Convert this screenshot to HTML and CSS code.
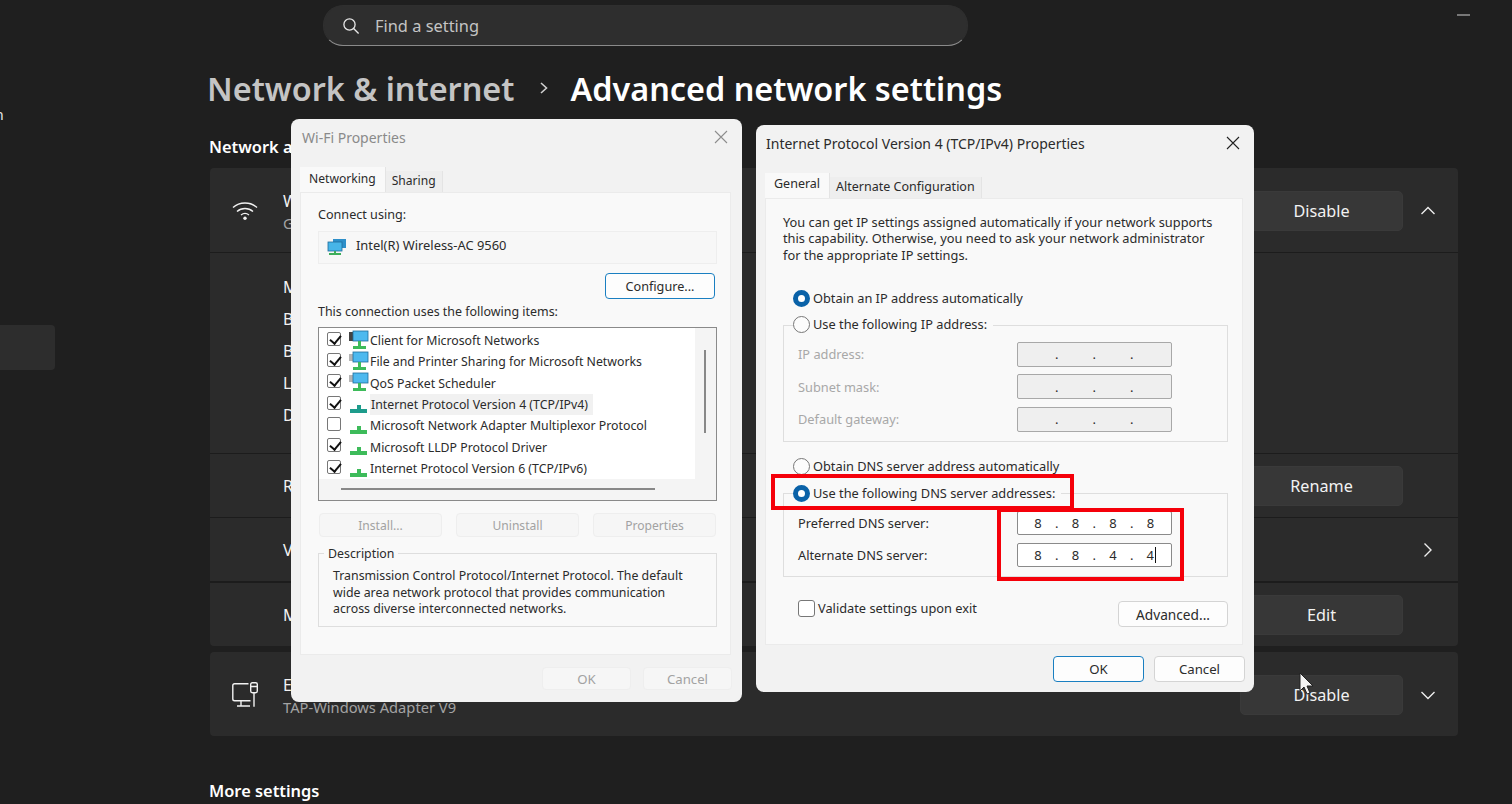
FILE: index.html
```html
<!DOCTYPE html>
<html>

<head>
    <title>Advanced network settings</title>
    <meta name="viewport" content="width=device-width, initial-scale=1.0">
    <link rel="stylesheet" href="styles.css">
</head>

<body>
    <div class="app">
        <aside class="sidebar">
            <div class="side-text">n</div>
            <div class="side-active"></div>
        </aside>

        <main class="main">
            <div class="search-wrap">
                <div class="search">
                    <svg class="search-icon" width="18" height="18" viewBox="0 0 18 18">
                        <circle cx="7.5" cy="7.5" r="5.6" fill="none" stroke="#e8e8e8" stroke-width="1.3" />
                        <path d="M11.6 11.6 L16.6 16.6" stroke="#e8e8e8" stroke-width="1.4" />
                    </svg>
                    <span>Find a setting</span>
                </div>
                <div class="min-mark"></div>
            </div>

            <h1 class="crumbs">
                <span class="crumb-parent">Network &amp; internet</span>
                <svg class="crumb-sep" width="12" height="16" viewBox="0 0 12 16">
                    <path d="M3 3 L8.5 8 L3 13" fill="none" stroke="#d0d0d0" stroke-width="1.6" />
                </svg>
                <span>Advanced network settings</span>
            </h1>

            <h2 class="section-title">Network adapters</h2>

            <section class="card">
                <div class="row row-head">
                    <svg class="row-icon" width="26" height="20" viewBox="0 0 26 20">
                        <path d="M1 6.5 C7.5 0.5 18.5 0.5 25 6.5 M5 10.5 C9.5 6.5 16.5 6.5 21 10.5 M9 14 C11.5 12 14.5 12 17 14" fill="none" stroke="#f2f2f2" stroke-width="1.4" />
                        <circle cx="13" cy="17.2" r="1.7" fill="#f2f2f2" />
                    </svg>
                    <div class="row-text">
                        <div class="row-name">Wi-Fi</div>
                        <div class="row-sub">Google</div>
                    </div>
                    <button class="btn">Disable</button>
                    <svg class="chev" width="16" height="16" viewBox="0 0 16 16">
                        <path d="M1.5 11 L8 4.5 L14.5 11" fill="none" stroke="#ededed" stroke-width="1.4" />
                    </svg>
                </div>
                <div class="row row-details">
                    <div>Manufacturer:</div>
                    <div>Bluetooth:</div>
                    <div>Bands:</div>
                    <div>Link speed:</div>
                    <div>Driver:</div>
                </div>
                <div class="row row-rename">
                    <div class="row-label">Rename this adapter</div>
                    <button class="btn">Rename</button>
                    <div class="chev-space"></div>
                </div>
                <div class="row row-view">
                    <div class="row-label">View additional properties</div>
                    <svg class="chev" width="16" height="16" viewBox="0 0 16 16">
                        <path d="M4.5 1.5 L11 8 L4.5 14.5" fill="none" stroke="#ededed" stroke-width="1.4" />
                    </svg>
                </div>
                <div class="row row-edit">
                    <div class="row-label">More adapter options</div>
                    <button class="btn">Edit</button>
                    <div class="chev-space"></div>
                </div>
            </section>

            <section class="card card-second">
                <div class="row row-head row-eth">
                    <svg class="row-icon" width="26" height="26" viewBox="0 0 26 26">
                        <path d="M16.5 1.7 H2.6 Q0.8 1.7 0.8 3.5 V17 Q0.8 18.8 2.6 18.8 H18.5 M9 18.8 V23.7 M5 24 H18" fill="none" stroke="#f2f2f2" stroke-width="1.4" />
                        <rect x="18.7" y="0.7" width="6.6" height="10" rx="1.6" fill="none" stroke="#f2f2f2" stroke-width="1.4" />
                        <path d="M18.7 4.5 H25.3 M22 10.7 V24.8" fill="none" stroke="#f2f2f2" stroke-width="1.4" />
                    </svg>
                    <div class="row-text">
                        <div class="row-name">Ethernet</div>
                        <div class="row-sub">TAP-Windows Adapter V9</div>
                    </div>
                    <button class="btn">Disable</button>
                    <svg class="chev" width="16" height="16" viewBox="0 0 16 16">
                        <path d="M1.5 5 L8 11.5 L14.5 5" fill="none" stroke="#ededed" stroke-width="1.4" />
                    </svg>
                </div>
            </section>

            <h2 class="section-title section-more">More settings</h2>
        </main>
    </div>

    <!-- Wi-Fi properties window -->
    <div class="dialog dialog-wifi">
        <div class="dialog-title title-faded">
            <span>Wi-Fi Properties</span>
            <svg width="14" height="14" viewBox="0 0 14 14">
                <path d="M1 1 L13 13 M13 1 L1 13" stroke="#8d8d8d" stroke-width="1.1" />
            </svg>
        </div>
        <div class="tabs tabs-wifi">
            <div class="tab tab-on">Networking</div>
            <div class="tab">Sharing</div>
        </div>
        <div class="panel panel-wifi">
            <div class="field-label">Connect using:</div>
            <div class="adapter">
                <svg width="20" height="20" viewBox="0 0 20 20">
                    <rect x="6" y="2" width="13" height="9" fill="#2d8fc9" />
                    <rect x="1" y="5" width="14" height="9" fill="#47b5e8" stroke="#1f6d9c" stroke-width="0.8" />
                    <path d="M7 14 H9 V16 H14 V18 H2 V16 H7 Z" fill="#3dae5a" />
                </svg>
                <span>Intel(R) Wireless-AC 9560</span>
            </div>
            <div class="configure-row">
                <button class="dlg-btn dlg-btn-primary configure">Configure...</button>
            </div>
            <div class="field-label items-label">This connection uses the following items:</div>
            <div class="items">
                <div class="items-list">
                    <div class="item">
                        <span class="check check-on"></span>
                        <svg class="net-icon" width="20" height="20" viewBox="0 0 20 20">
                            <rect x="0" y="2" width="5" height="9" fill="#444" />
                            <rect x="4" y="1" width="15" height="10" fill="#4db9ef" stroke="#1f6d9c" stroke-width="0.8" />
                            <path d="M9 11 H12 V16 H17 V19 H4 V16 H9 Z" fill="#3dbb5a" />
                        </svg>
                        <span>Client for Microsoft Networks</span>
                    </div>
                    <div class="item">
                        <span class="check check-on"></span>
                        <svg class="net-icon" width="20" height="20" viewBox="0 0 20 20">
                            <rect x="0" y="3" width="5" height="7" fill="#b5b5b5" />
                            <rect x="4" y="1" width="15" height="10" fill="#4db9ef" stroke="#1f6d9c" stroke-width="0.8" />
                            <path d="M9 11 H12 V16 H17 V19 H4 V16 H9 Z" fill="#3dbb5a" />
                        </svg>
                        <span>File and Printer Sharing for Microsoft Networks</span>
                    </div>
                    <div class="item">
                        <span class="check check-on"></span>
                        <svg class="net-icon" width="20" height="20" viewBox="0 0 20 20">
                            <rect x="0" y="3" width="5" height="7" fill="#b5b5b5" />
                            <rect x="4" y="1" width="15" height="10" fill="#4db9ef" stroke="#1f6d9c" stroke-width="0.8" />
                            <path d="M9 11 H12 V16 H17 V19 H4 V16 H9 Z" fill="#3dbb5a" />
                        </svg>
                        <span>QoS Packet Scheduler</span>
                    </div>
                    <div class="item">
                        <span class="check check-on"></span>
                        <svg class="net-icon" width="20" height="20" viewBox="0 0 20 20">
                            <path d="M8 11 H12 V15 H18 V19 H1 V15 H8 Z" fill="#1e9c8c" />
                        </svg>
                        <span class="item-selected">Internet Protocol Version 4 (TCP/IPv4)</span>
                    </div>
                    <div class="item">
                        <span class="check"></span>
                        <svg class="net-icon" width="20" height="20" viewBox="0 0 20 20">
                            <path d="M8 11 H12 V15 H18 V19 H1 V15 H8 Z" fill="#3dbb5a" />
                        </svg>
                        <span>Microsoft Network Adapter Multiplexor Protocol</span>
                    </div>
                    <div class="item">
                        <span class="check check-on"></span>
                        <svg class="net-icon" width="20" height="20" viewBox="0 0 20 20">
                            <path d="M8 11 H12 V15 H18 V19 H1 V15 H8 Z" fill="#3dbb5a" />
                        </svg>
                        <span>Microsoft LLDP Protocol Driver</span>
                    </div>
                    <div class="item">
                        <span class="check check-on"></span>
                        <svg class="net-icon" width="20" height="20" viewBox="0 0 20 20">
                            <path d="M8 11 H12 V15 H18 V19 H1 V15 H8 Z" fill="#3dbb5a" />
                        </svg>
                        <span>Internet Protocol Version 6 (TCP/IPv6)</span>
                    </div>
                </div>
                <div class="scroll-v"></div>
                <div class="scroll-h"></div>
            </div>
            <div class="three-btns">
                <button class="dlg-btn dlg-btn-off">Install...</button>
                <button class="dlg-btn dlg-btn-off">Uninstall</button>
                <button class="dlg-btn dlg-btn-off">Properties</button>
            </div>
            <div class="groupbox desc-box">
                <div class="legend">Description</div>
                <p>Transmission Control Protocol/Internet Protocol. The default wide area network protocol that provides communication across diverse interconnected networks.</p>
            </div>
        </div>
        <div class="dialog-foot foot-wifi">
            <button class="dlg-btn dlg-btn-off foot-btn">OK</button>
            <button class="dlg-btn dlg-btn-off foot-btn">Cancel</button>
        </div>
    </div>

    <!-- IPv4 properties window -->
    <div class="dialog dialog-ip">
        <div class="dialog-title">
            <span>Internet Protocol Version 4 (TCP/IPv4) Properties</span>
            <svg width="14" height="14" viewBox="0 0 14 14">
                <path d="M1 1 L13 13 M13 1 L1 13" stroke="#222" stroke-width="1.1" />
            </svg>
        </div>
        <div class="tabs">
            <div class="tab tab-on">General</div>
            <div class="tab">Alternate Configuration</div>
        </div>
        <div class="panel panel-ip">
            <p class="intro">You can get IP settings assigned automatically if your network supports this capability. Otherwise, you need to ask your network administrator for the appropriate IP settings.</p>
            <div class="radio-row first-radio"><span class="radio radio-on"></span>Obtain an IP address automatically</div>
            <div class="groupbox ip-box">
                <div class="legend legend-radio"><span class="radio"></span>Use the following IP address:</div>
                <div class="ip-row off"><span>IP address:</span>
                    <div class="ip-input ip-off"><span></span><i>.</i><span></span><i>.</i><span></span><i>.</i><span></span></div>
                </div>
                <div class="ip-row off"><span>Subnet mask:</span>
                    <div class="ip-input ip-off"><span></span><i>.</i><span></span><i>.</i><span></span><i>.</i><span></span></div>
                </div>
                <div class="ip-row off"><span>Default gateway:</span>
                    <div class="ip-input ip-off"><span></span><i>.</i><span></span><i>.</i><span></span><i>.</i><span></span></div>
                </div>
            </div>
            <div class="radio-row dns-radio"><span class="radio"></span>Obtain DNS server address automatically</div>
            <div class="groupbox dns-box">
                <div class="legend legend-radio"><span class="radio radio-on"></span>Use the following DNS server addresses:</div>
                <div class="ip-row dns-row"><span>Preferred DNS server:</span>
                    <div class="ip-input"><span>8</span><i>.</i><span>8</span><i>.</i><span>8</span><i>.</i><span>8</span></div>
                </div>
                <div class="ip-row dns-row"><span>Alternate DNS server:</span>
                    <div class="ip-input"><span>8</span><i>.</i><span>8</span><i>.</i><span>4</span><i>.</i><span class="caret">4</span></div>
                </div>
            </div>
            <div class="validate-row">
                <div class="validate"><span class="check round"></span>Validate settings upon exit</div>
                <button class="dlg-btn advanced">Advanced...</button>
            </div>
        </div>
        <div class="dialog-foot">
            <button class="dlg-btn dlg-btn-primary foot-btn">OK</button>
            <button class="dlg-btn foot-btn">Cancel</button>
        </div>
        <div class="mark mark-radio"></div>
        <div class="mark mark-fields"></div>
    </div>

    <svg class="cursor" width="16" height="24" viewBox="0 0 16 24">
        <path d="M1 1 L1 19 L5 15 L8 22 L11 21 L8 14 L14 14 Z" fill="#f4f4f4" stroke="#222" stroke-width="1" />
    </svg>
</body>

</html>
```

FILE: styles.css
```css
* {
    box-sizing: border-box;
}

body {
    margin: 0;
    width: 1512px;
    height: 804px;
    overflow: hidden;
    background-color: #1f1f1f;
    color: #f2f2f2;
    font-family: "Noto Sans", "Open Sans", sans-serif;
}

.app {
    display: flex;
    height: 804px;
}

/* sidebar, almost all of it is cropped off */
.sidebar {
    width: 210px;
    flex-shrink: 0;
}

.side-text {
    margin: 104px 0 0 -5px;
    height: 24px;
    font-size: 14px;
    line-height: 22px;
    color: #e8e8e8;
}

.side-active {
    margin-top: 197px;
    width: 55px;
    height: 45px;
    background-color: #2d2d2d;
    border-radius: 0 4px 4px 0;
}

.main {
    width: 1248px;
    flex-shrink: 0;
}

.search-wrap {
    display: flex;
    justify-content: space-between;
    padding: 5px 0 0 113px;
}

.search {
    display: flex;
    align-items: center;
    gap: 15px;
    width: 645px;
    height: 41px;
    padding-left: 18px;
    background-color: #2e2e2e;
    border: 1px solid #2f2f2f;
    border-bottom-color: #8a8a8a;
    border-radius: 20px;
    font-size: 16.4px;
    color: #c4c4c4;
}

.search-icon {
    flex-shrink: 0;
}

.min-mark {
    width: 13px;
    height: 2px;
    margin: 9px -12px 0 0;
    background-color: #777;
}

.crumbs {
    display: flex;
    align-items: center;
    height: 48px;
    margin: 18px 0 0 -3px;
    font-size: 32.4px;
    font-weight: 600;
    color: #fff;
    white-space: nowrap;
}

.crumb-parent {
    color: #c4c4c4;
}

.crumb-sep {
    margin: 0 20px 0 24px;
}

.section-title {
    margin: 24px 0 0 -1px;
    height: 22px;
    font-size: 16.4px;
    line-height: 22px;
    font-weight: 600;
    color: #fff;
}

.section-more {
    margin-top: 44px;
}

.card {
    margin-top: 10px;
    background-color: #2b2b2b;
    border-radius: 4px;
}

.card-second {
    margin-top: 6px;
}

.row {
    display: flex;
    align-items: center;
    padding-right: 22px;
    border-bottom: 1px solid #1c1c1c;
}

.row:last-child {
    border-bottom: 0;
}

.row-head {
    height: 85px;
    padding-top: 2px;
    padding-left: 22px;
}

.row-eth {
    height: 84px;
}

.row-icon {
    flex-shrink: 0;
    margin-right: 25px;
}

.row-text {
    flex: 1;
    padding-top: 2px;
}

.row-name {
    font-size: 16px;
    line-height: 22px;
}

.row-sub {
    font-size: 14.7px;
    line-height: 22px;
    color: #a3a3a3;
}

.row-details {
    display: block;
    height: 201px;
    padding: 18px 0 0 73px;
    font-size: 16px;
    line-height: 32px;
}

.row-rename,
.row-view,
.row-edit {
    padding-left: 73px;
}

.row-rename {
    height: 64px;
}

.row-view {
    height: 65px;
    border-bottom-width: 2px;
}

.row-edit {
    height: 63px;
}

.row-label {
    flex: 1;
    font-size: 16px;
}

.btn {
    width: 163px;
    height: 40px;
    background-color: #373737;
    border: 1px solid #3a3a3a;
    border-radius: 5px;
    color: #f2f2f2;
    font-family: inherit;
    font-size: 16.2px;
}

.chev {
    flex-shrink: 0;
    margin-left: 17px;
}

.chev-space {
    width: 33px;
    flex-shrink: 0;
}

.dialog {
    position: absolute;
    background-color: #f2f2f2;
    border-radius: 8px;
    color: #2b2b2b;
    font-size: 12.5px;
}

.dialog-wifi {
    left: 291px;
    top: 119px;
    width: 451px;
    height: 583px;
}

.dialog-ip {
    left: 756px;
    top: 125px;
    width: 498px;
    height: 567px;
}

.dialog-title {
    display: flex;
    justify-content: space-between;
    align-items: center;
    height: 36px;
    padding: 0 14px 0 10px;
    font-size: 14px;
}

.title-faded {
    padding-left: 11px;
    color: #8a8a8a;
}

.tabs {
    display: flex;
    height: 25px;
    padding-left: 9px;
    margin-top: 12px;
}

.tabs-wifi {
    font-size: 12.1px;
}

.tab {
    margin-top: 4px;
    height: 21px;
    padding: 0 6px;
    line-height: 20px;
    background-color: #eeeeee;
    border-right: 1px solid #e4e4e4;
}

.tab-on {
    margin-top: 0;
    height: 25px;
    background-color: #f9f9f9;
    line-height: 22px;
    padding: 0 9px;
}

.tabs-wifi .tab-on {
    line-height: 24px;
}

.panel {
    background-color: #f9f9f9;
    border: 1px solid #ebebeb;
    margin: 0 11px 0 9px;
}

.panel-wifi {
    height: 463px;
    padding: 0 13px 0 17px;
}

.field-label {
    padding-top: 13px;
    height: 38px;
    line-height: 18px;
    font-size: 12.6px;
}

.adapter {
    display: flex;
    align-items: center;
    gap: 9px;
    height: 33px;
    padding: 0 0 6px 8px;
    background-color: #f7f7f7;
    border: 1px solid #eeeeee;
    font-size: 12.9px;
}

.adapter svg {
    margin-top: 4px;
}

.configure-row {
    display: flex;
    justify-content: flex-end;
    margin-top: 9px;
    padding-right: 2px;
}

.dlg-btn {
    height: 24px;
    background-color: #fdfdfd;
    border: 1px solid #d4d4d4;
    border-radius: 4px;
    color: #2b2b2b;
    font-family: inherit;
    font-size: 13.2px;
    padding: 0;
}

.dlg-btn-primary {
    border: 1.5px solid #1a7fc1;
}

.dlg-btn-off {
    color: #a2a2a2;
    background-color: #f6f6f6;
    border-color: #eeeeee;
}

.configure {
    width: 110px;
    height: 26px;
    font-size: 12.65px;
}

.items-label {
    height: 28px;
    padding-top: 4px;
    font-size: 12.45px;
}

.items {
    position: relative;
    height: 174px;
    background-color: #f4f4f4;
    border: 1px solid #8a8a8a;
    font-size: 12.3px;
}

.items-list {
    width: 376px;
    height: 151px;
    padding: 2px 0 0 8px;
    background-color: #fff;
}

.item {
    display: flex;
    align-items: center;
    height: 21.33px;
    white-space: nowrap;
}

.check {
    width: 14px;
    height: 14px;
    margin-top: -4px;
    background-color: #fff;
    border: 1px solid #777;
    border-radius: 2px;
    flex-shrink: 0;
}

/* tick drawn with two borders */
.check-on::after {
    content: "";
    display: block;
    width: 5px;
    height: 9px;
    margin: 0 0 0 3.5px;
    border-right: 2px solid #111;
    border-bottom: 2px solid #111;
    transform: rotate(40deg);
}

.net-icon {
    margin: -2px 1px 0 8px;
    flex-shrink: 0;
}

.item-selected {
    background-color: #f1f1f1;
    padding: 2px 5px 2px 1px;
    line-height: 17px;
}

.scroll-v {
    position: absolute;
    right: 10px;
    top: 22px;
    width: 2px;
    height: 83px;
    background-color: #888;
}

.scroll-h {
    position: absolute;
    left: 22px;
    bottom: 10px;
    width: 314px;
    height: 2px;
    background-color: #888;
}

.three-btns {
    display: grid;
    grid-template-columns: repeat(3, 123px);
    justify-content: space-between;
    margin-top: 12px;
    padding: 0 1px 0 1px;
}

.three-btns .dlg-btn {
    font-size: 12.1px;
}

.groupbox {
    position: relative;
    border: 1px solid #dedede;
}

.legend {
    position: absolute;
    top: -10px;
    left: 5px;
    padding: 0 4px;
    line-height: 18px;
    background-color: #f9f9f9;
}

.desc-box {
    height: 74px;
    margin-top: 16px;
    padding: 14px 14px 0 14px;
    font-size: 12.35px;
}

.desc-box .legend {
    top: -9px;
}

.desc-box p {
    margin: 0;
    line-height: 16.5px;
}

.dialog-foot {
    display: flex;
    justify-content: flex-end;
    gap: 10px;
    padding: 11px 9px 0 0;
}

.foot-wifi {
    gap: 12px;
    padding: 12px 10px 0 0;
}

.foot-wifi .foot-btn {
    width: 89px;
    height: 23px;
}

.foot-btn {
    width: 91px;
    height: 26px;
}

.panel-ip {
    position: relative;
    height: 447px;
    padding: 15px 14px 0 17px;
    font-size: 12.8px;
}

.intro {
    margin: 0;
    width: 434px;
    line-height: 16.4px;
}

.radio-row {
    display: flex;
    align-items: center;
    gap: 3px;
    height: 20px;
}

.first-radio {
    margin: 25px 0 0 10px;
}

.radio {
    display: inline-block;
    width: 17px;
    height: 17px;
    background-color: #fcfcfc;
    border: 1px solid #777;
    border-radius: 50%;
    flex-shrink: 0;
}

.radio-on {
    background-color: #fff;
    border: 5px solid #0a62a8;
}

.ip-box {
    height: 117px;
    margin-top: 17px;
    padding-top: 11.5px;
}

.legend-radio {
    display: flex;
    align-items: center;
    gap: 3px;
    left: 9px;
    padding: 0 6px 0 0;
}

.ip-box .legend-radio {
    top: -11px;
}

.ip-row {
    display: flex;
    justify-content: space-between;
    align-items: center;
    height: 32.6px;
    padding: 0 55px 0 14px;
}

.dns-row {
    height: 32px;
}

.off {
    color: #a8a8a8;
}

.ip-input {
    display: flex;
    align-items: center;
    width: 155px;
    height: 25px;
    padding-left: 10.5px;
    background-color: #fff;
    border: 1px solid #8a8a8a;
    border-radius: 2px;
    color: #2b2b2b;
    font-size: 13px;
}

.dns-row .ip-input {
    height: 24px;
}

.ip-off {
    background-color: #efefef;
    border-color: #a8a8a8;
}

.ip-input span,
.ip-input i {
    width: 18.75px;
    font-style: normal;
    text-align: center;
}

.ip-input .caret {
    width: 14.5px;
    margin-left: 0;
    padding-left: 5.5px;
    border-right: 1px solid #111;
    line-height: 16px;
    text-align: left;
}

.dns-radio {
    margin: 14px 0 0 10px;
}

.dns-box {
    height: 84px;
    margin-top: 17px;
    padding-top: 13px;
}

.validate-row {
    display: flex;
    justify-content: space-between;
    align-items: flex-start;
    margin-top: 21px;
    padding-left: 15px;
}

.validate {
    display: flex;
    align-items: center;
    gap: 3px;
    height: 20px;
}

.validate .round {
    width: 17px;
    height: 17px;
    margin: 0;
    border-radius: 3px;
}

.advanced {
    width: 110px;
    height: 26px;
    margin-top: 3px;
    font-size: 13.7px;
}

.mark {
    position: absolute;
    border: 4px solid #f5000a;
}

.mark-radio {
    left: 15px;
    top: 349px;
    width: 303px;
    height: 36px;
}

.mark-fields {
    left: 241px;
    top: 383px;
    width: 187px;
    height: 73px;
}

.cursor {
    position: absolute;
    left: 1299px;
    top: 672px;
}
```
